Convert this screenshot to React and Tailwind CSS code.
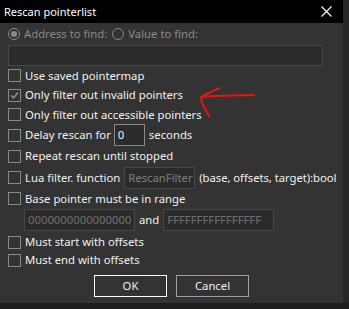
import React from "react";

const font = { fontFamily: '"Noto Sans", "Open Sans", sans-serif' };

function Box({ checked }) {
  return (
    <div className="w-[13px] h-[13px] border border-[#8a8a8a] shrink-0 relative">
      {checked && (
        <svg width="11" height="11" viewBox="0 0 11 11" className="absolute left-0 top-0">
          <path d="M2 5.5 L4.5 8 L9 2.5" fill="none" stroke="#9a9a9a" strokeWidth="1.2" />
        </svg>
      )}
    </div>
  );
}

function Radio({ checked }) {
  return (
    <div className="w-[12px] h-[12px] rounded-full border border-[#8a8a8a] shrink-0 flex items-center justify-center">
      {checked && <div className="w-[6px] h-[6px] rounded-full bg-[#8a8a8a]" />}
    </div>
  );
}

function CheckRow({ label, checked, h, children }) {
  return (
    <div className={`flex items-center whitespace-nowrap ${h}`}>
      <Box checked={checked} />
      <span className="ml-[4px] text-[#f0f0f0]">{label}</span>
      {children}
    </div>
  );
}

export default function App() {
  return (
    <div className="w-[349px] h-[309px] bg-[#1e1e1e] text-[11.3px] leading-none" style={font}>
      <div className="flex">
        <div className="w-[343px] h-[303px] flex flex-col bg-[#333333]">
          <div className="h-[23px] bg-black flex items-center justify-between pl-[4px] pr-[11px]">
            <span className="text-white text-[11px]">Rescan pointerlist</span>
            <svg width="11" height="11" viewBox="0 0 11 11">
              <path d="M0.5 0.5 L10.5 10.5 M10.5 0.5 L0.5 10.5" stroke="#fff" strokeWidth="1.1" />
            </svg>
          </div>
          <div className="relative flex flex-col pl-[8px] pr-[20px] pt-[1px]">
            <div className="flex items-center h-[20px] text-[#8a8a8a] whitespace-nowrap">
              <Radio checked />
              <span className="ml-[4px]">Address to find:</span>
              <div className="ml-[5px]"><Radio /></div>
              <span className="ml-[4px]">Value to find:</span>
            </div>
            <div className="mt-[1px] h-[21px] w-[315px] bg-[#2b2b2b] border border-[#484848]" />
            <CheckRow label="Use saved pointermap" h="h-[19px]" />
            <CheckRow label="Only filter out invalid pointers" checked h="h-[20px]" />
            <CheckRow label="Only filter out accessible pointers" h="h-[19px]" />
            <CheckRow label="Delay rescan for" h="h-[22px]">
              <div className="ml-[3px] shrink-0 w-[31px] h-[22px] bg-[#2b2b2b] border border-[#8a8a8a] flex items-center pl-[3px] text-[#f0f0f0]">0</div>
              <span className="ml-[4px] text-[#f0f0f0]">seconds</span>
            </CheckRow>
            <CheckRow label="Repeat rescan until stopped" h="h-[20px]" />
            <CheckRow label="Lua filter. function" h="h-[23px]">
              <div className="ml-[4px] shrink-0 w-[71px] h-[22px] bg-[#2b2b2b] border border-[#484848] flex items-center pl-[3px] text-[#7f7f7f] overflow-hidden">RescanFilter</div>
              <span className="ml-[4px] text-[#f0f0f0] tracking-[-0.05px]">(base, offsets, target):bool</span>
            </CheckRow>
            <CheckRow label="Base pointer must be in range" h="h-[19px]" />
            <div className="flex items-center h-[23px] pl-[16px] whitespace-nowrap">
              <div className="shrink-0 w-[111px] h-[22px] bg-[#2b2b2b] border border-[#484848] flex items-center pl-[3px] text-[#6e6e6e] overflow-hidden">0000000000000000</div>
              <span className="ml-[4px] text-[#f0f0f0]">and</span>
              <div className="ml-[4px] shrink-0 w-[111px] h-[22px] bg-[#2b2b2b] border border-[#484848] flex items-center pl-[3px] text-[#6e6e6e] overflow-hidden">FFFFFFFFFFFFFFFF</div>
            </div>
            <CheckRow label="Must start with offsets" h="h-[20px] mt-[1px]" />
            <CheckRow label="Must end with offsets" h="h-[16px]" />
            <div className="flex mt-[7px] ml-[86px] gap-[9px]">
              <div className="w-[73px] h-[22px] border border-white flex items-center justify-center text-[#f0f0f0]">OK</div>
              <div className="w-[73px] h-[22px] border border-[#a0a0a0] flex items-center justify-center text-[#f0f0f0]">Cancel</div>
            </div>
            <svg className="absolute left-0 top-0 pointer-events-none" width="343" height="280" viewBox="0 23 343 280">
              <path d="M254 95 C240 95 225 96 212 96 L201 97 C206 94 212 92 215 90 L219 88 M201 97 C201 103 204 107 206 110 L209 116" fill="none" stroke="#ee1111" strokeWidth="2" strokeLinecap="round" strokeLinejoin="round" />
            </svg>
          </div>
        </div>
        <div className="w-[6px] h-[303px] bg-[#262626]" />
      </div>
    </div>
  );
}
